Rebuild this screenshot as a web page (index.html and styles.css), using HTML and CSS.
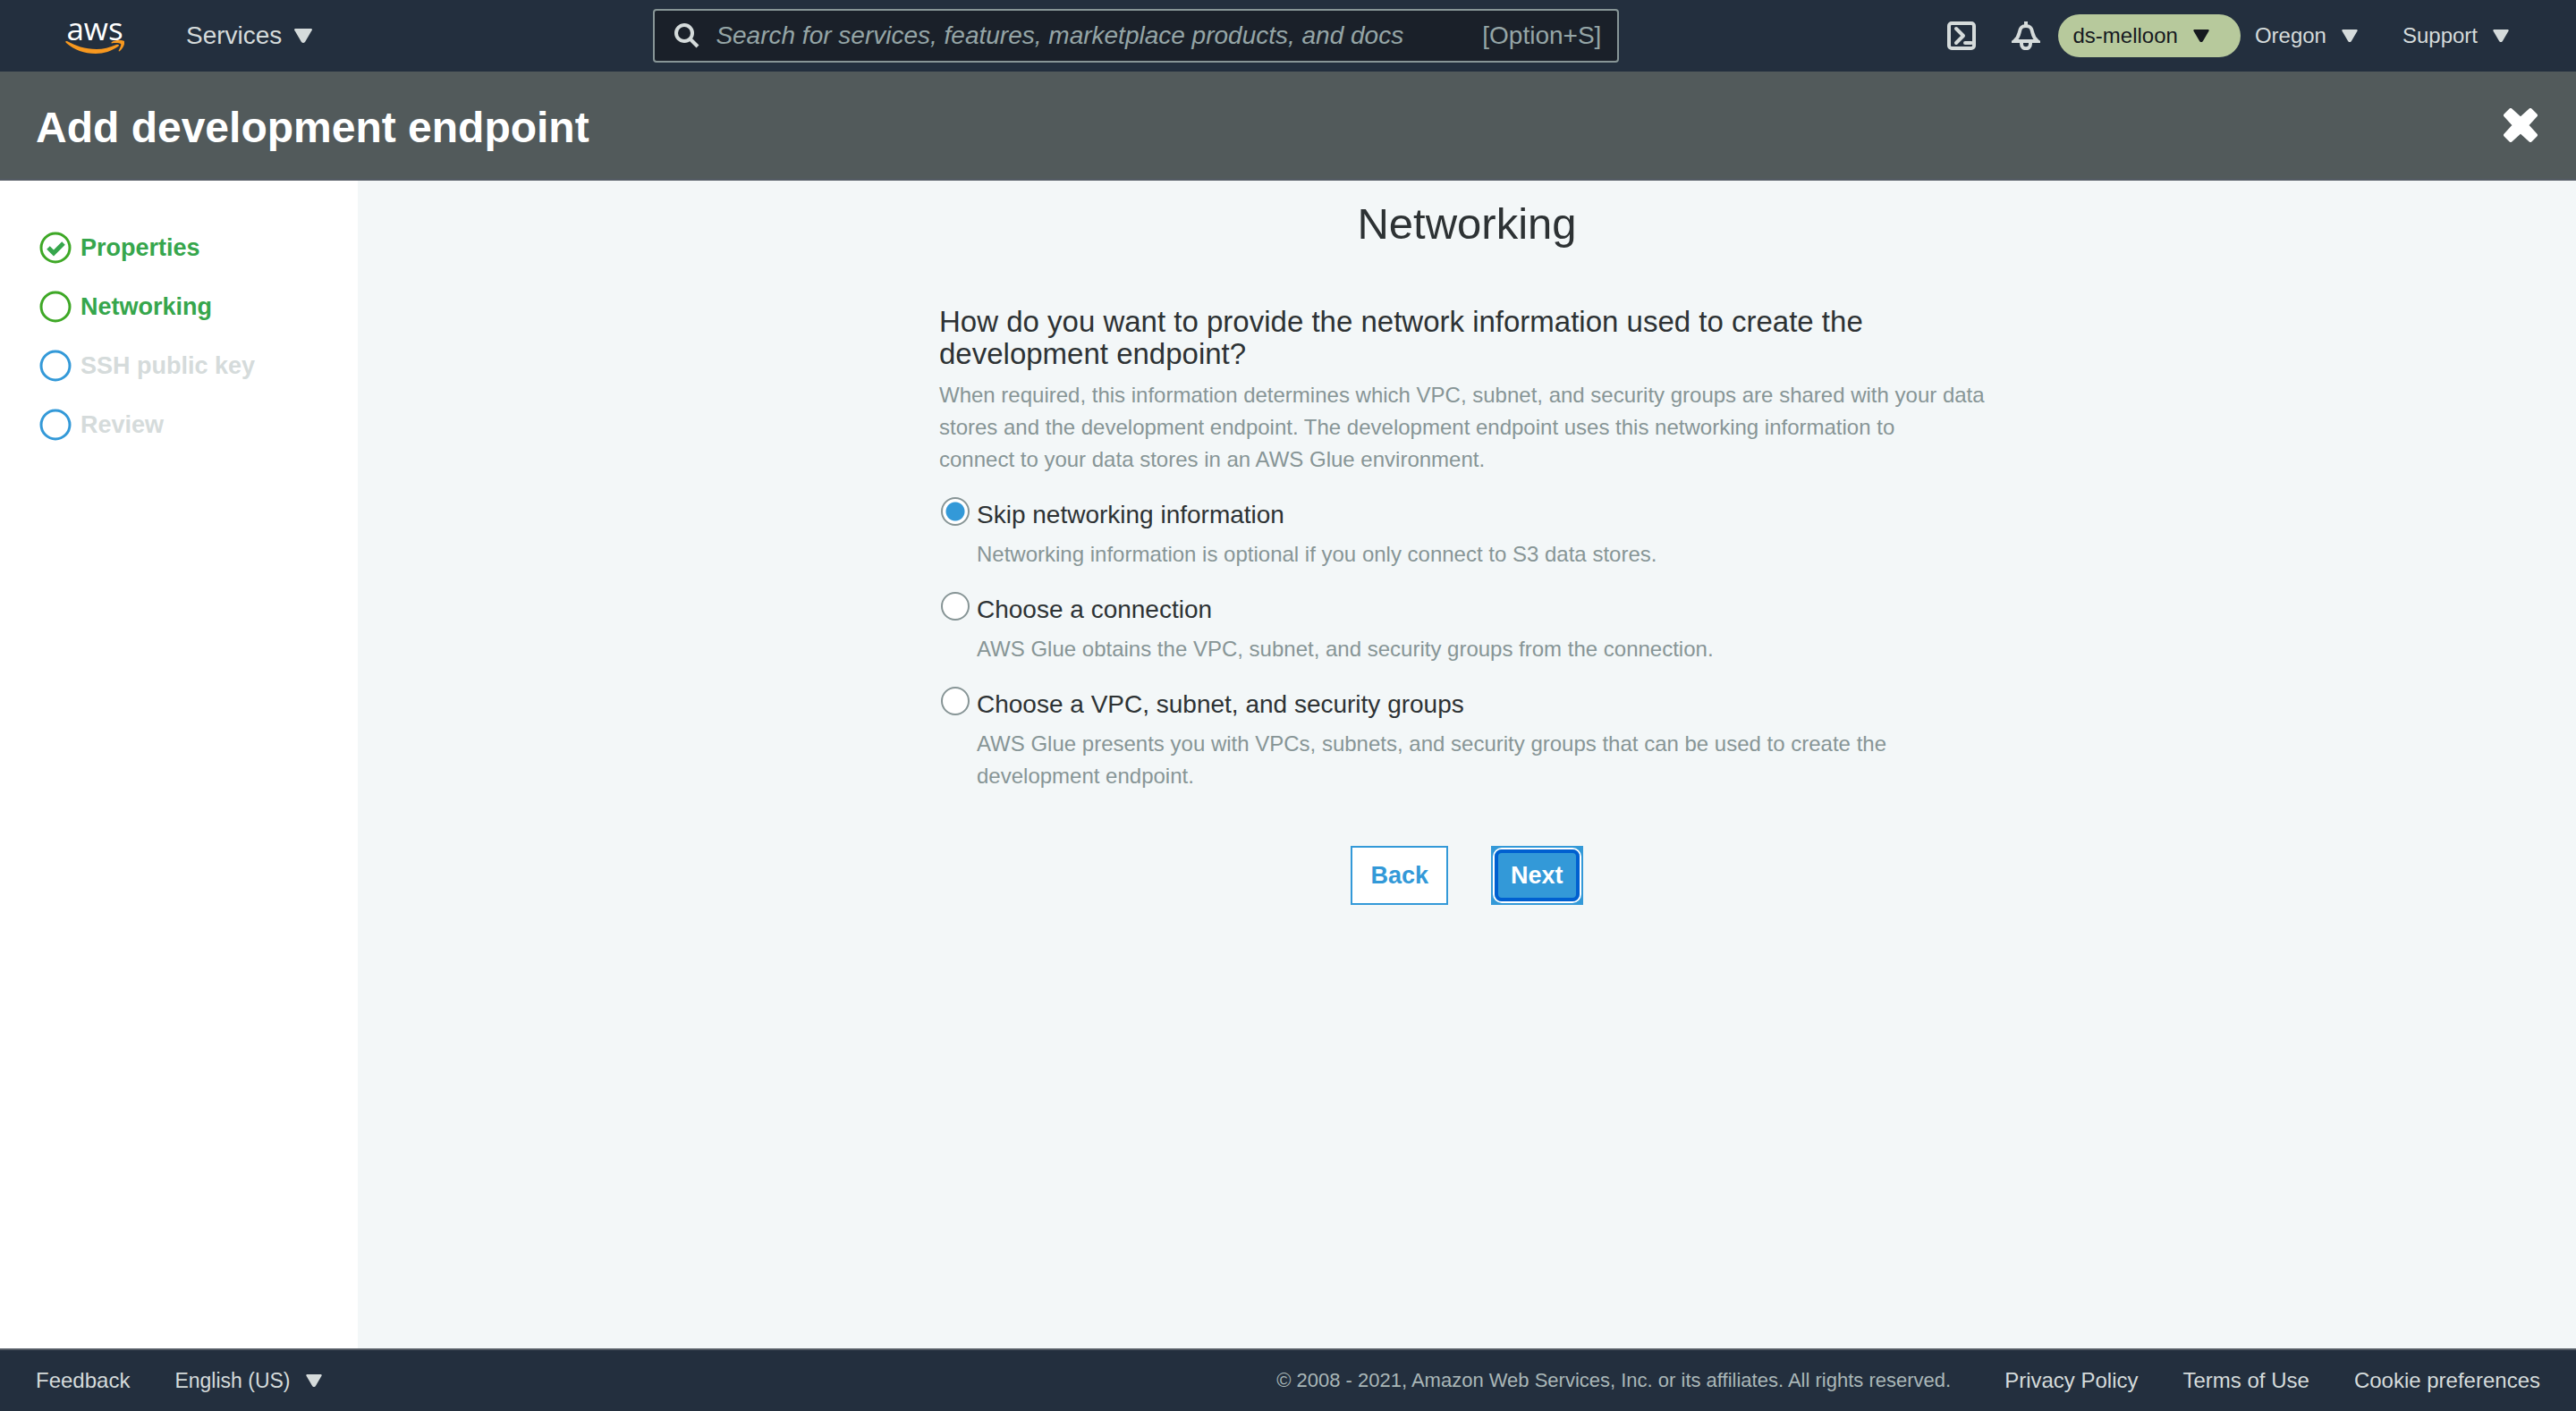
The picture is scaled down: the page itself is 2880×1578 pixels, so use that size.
FILE: index.html
```html
<!DOCTYPE html>
<html lang="en">
<head>
<meta charset="utf-8">
<title>Add development endpoint</title>
<link rel="stylesheet" href="styles.css">
</head>
<body>
<header class="topbar">
  <a class="logo" href="#" aria-label="AWS home">
    <span class="logo-word">aws</span>
    <svg class="logo-smile" viewBox="0 0 66 16" aria-hidden="true">
      <path d="M1 1C0 1 0 2 1 3C10 11 21 15 34 15C43 15 52 12 59 7C61 6 60 4 57 5C50 8 42 10 35 10C22 10 11 6 2 1Z"/>
      <path d="M52 2C56 -1 65 0 66 1C67 3 65 9 61 12C60 13 59 12 60 11C61 9 63 5 62 4C61 3 57 3 54 3C51 4 51 3 52 2Z"/>
    </svg>
  </a>
  <button class="menu menu-services" type="button">Services<svg class="caret caret-lg" viewBox="0 0 20 16" aria-hidden="true"><path d="M1 0H19Q21 1 19 3L12 15Q10 17 8 15L1 3Q-1 1 1 0Z"/></svg></button>
  <label class="search">
    <svg class="search-icon" viewBox="0 0 28 28" aria-hidden="true"><circle cx="11" cy="11" r="9"/><path d="M18 18L26 26"/></svg>
    <input class="search-input" type="text" aria-label="Search" placeholder="Search for services, features, marketplace products, and docs">
    <span class="search-key">[Option+S]</span>
  </label>
  <nav class="tools" aria-label="Account">
    <button class="icon-button shell" type="button" aria-label="CloudShell">
      <svg viewBox="0 0 32 32" aria-hidden="true"><rect x="2" y="2" width="28" height="28" rx="3"/><path d="M10 8L18 16L10 24M20 24H27" stroke-linecap="round" stroke-linejoin="round"/></svg>
    </button>
    <button class="icon-button bell" type="button" aria-label="Notifications">
      <svg viewBox="0 0 32 32" aria-hidden="true"><path d="M16 0V5M3 22C8 18 8 15 9 11C10 6 12 5 16 5S22 6 23 11C24 15 24 18 29 22ZM11 23V25C11 32 21 32 21 25V23"/></svg>
    </button>
    <button class="menu menu-account" type="button">ds-melloon<svg class="caret" viewBox="0 0 20 16" aria-hidden="true"><path d="M1 0H19Q21 1 19 3L12 15Q10 17 8 15L1 3Q-1 1 1 0Z"/></svg></button>
    <button class="menu menu-region" type="button">Oregon<svg class="caret" viewBox="0 0 20 16" aria-hidden="true"><path d="M1 0H19Q21 1 19 3L12 15Q10 17 8 15L1 3Q-1 1 1 0Z"/></svg></button>
    <button class="menu" type="button">Support<svg class="caret" viewBox="0 0 20 16" aria-hidden="true"><path d="M1 0H19Q21 1 19 3L12 15Q10 17 8 15L1 3Q-1 1 1 0Z"/></svg></button>
  </nav>
</header>
<div class="titlebar">
  <h1 class="title">Add development endpoint</h1>
  <button class="icon-button close" type="button" aria-label="Close">
    <svg viewBox="0 0 38 38" aria-hidden="true"><path d="M8 2L19 12L30 2L36 8L26 19L36 30L30 36L19 26L8 36L2 30L12 19L2 8Z"/></svg>
  </button>
</div>
<div class="body">
  <aside class="sidebar">
    <ol class="steps">
      <li class="step step-done"><svg class="step-icon" viewBox="0 0 36 36" aria-hidden="true"><circle cx="18" cy="18" r="16"/><path d="M10 18L16 24L27 13"/></svg>Properties</li>
      <li class="step step-done" aria-current="step"><svg class="step-icon" viewBox="0 0 36 36" aria-hidden="true"><circle cx="18" cy="18" r="16"/></svg>Networking</li>
      <li class="step"><svg class="step-icon" viewBox="0 0 36 36" aria-hidden="true"><circle cx="18" cy="18" r="16"/></svg>SSH public key</li>
      <li class="step"><svg class="step-icon" viewBox="0 0 36 36" aria-hidden="true"><circle cx="18" cy="18" r="16"/></svg>Review</li>
    </ol>
  </aside>
  <main class="main">
    <form class="wizard">
      <h2 class="heading">Networking</h2>
      <fieldset class="question">
        <legend class="legend">How do you want to provide the network information used to create the development endpoint?</legend>
        <p class="hint intro">When required, this information determines which VPC, subnet, and security groups are shared with your data stores and the development endpoint. The development endpoint uses this networking information to<br>connect to your data stores in an AWS Glue environment.</p>
        <div class="option">
          <input class="radio" type="radio" name="network" id="skip" checked>
          <label class="option-label" for="skip">Skip networking information</label>
          <p class="hint option-hint">Networking information is optional if you only connect to S3 data stores.</p>
        </div>
        <div class="option">
          <input class="radio" type="radio" name="network" id="connection">
          <label class="option-label" for="connection">Choose a connection</label>
          <p class="hint option-hint">AWS Glue obtains the VPC, subnet, and security groups from the connection.</p>
        </div>
        <div class="option">
          <input class="radio" type="radio" name="network" id="vpc">
          <label class="option-label" for="vpc">Choose a VPC, subnet, and security groups</label>
          <p class="hint option-hint">AWS Glue presents you with VPCs, subnets, and security groups that can be used to create the development endpoint.</p>
        </div>
      </fieldset>
      <div class="actions">
        <button class="button" type="button">Back</button>
        <button class="button button-primary" type="button"><span class="focus-ring">Next</span></button>
      </div>
    </form>
  </main>
</div>
<footer class="footer">
  <a class="footer-link" href="#">Feedback</a>
  <button class="menu menu-language" type="button">English (US)<svg class="caret" viewBox="0 0 20 16" aria-hidden="true"><path d="M1 0H19Q21 1 19 3L12 15Q10 17 8 15L1 3Q-1 1 1 0Z"/></svg></button>
  <p class="copyright">© 2008 - 2021, Amazon Web Services, Inc. or its affiliates. All rights reserved.</p>
  <a class="footer-link" href="#">Privacy Policy</a>
  <a class="footer-link" href="#">Terms of Use</a>
  <a class="footer-link" href="#">Cookie preferences</a>
</footer>
</body>
</html>
```
FILE: styles.css
```css
* {
  box-sizing: border-box;
}

body {
  margin: 0;
  min-height: 100vh;
  display: flex;
  flex-direction: column;
  font-family: "Liberation Sans", Arial, sans-serif;
  font-size: 24px;
  color: #2d3234;
  background: #f3f7f8;
}

h1, h2, p, ol, fieldset {
  margin: 0;
  padding: 0;
  border: 0;
  font-weight: 400;
}

button {
  margin: 0;
  padding: 0;
  border: 0;
  background: none;
  font: inherit;
  color: inherit;
}

.topbar {
  display: flex;
  align-items: center;
  height: 80px;
  padding: 0 75px 0 72px;
  background: #232f3e;
  color: #d5dbdb;
}

.logo {
  display: flex;
  flex-direction: column;
  align-items: center;
  width: 68px;
  text-decoration: none;
}

.logo-word {
  font-family: "Open Sans", "Noto Sans", sans-serif;
  font-weight: 500;
  font-size: 35px;
  line-height: 26px;
  color: #fff;
}

.logo-smile {
  width: 66px;
  height: 16px;
  fill: #f7981f;
}

.menu {
  display: flex;
  align-items: center;
  gap: 17px;
  white-space: nowrap;
}

.menu-services {
  gap: 14px;
  margin-left: 68px;
  font-size: 28px;
}

.menu-language {
  font-size: 23px;
}

.caret {
  width: 18px;
  height: 14px;
  fill: currentColor;
}

.caret-lg {
  width: 20px;
  height: 16px;
}

.search {
  display: flex;
  align-items: center;
  flex: 0 1 1080px;
  height: 60px;
  margin-left: 381px;
  padding: 0 18px 0 22px;
  border: 2px solid #879596;
  border-radius: 4px;
  background: #1a2029;
  color: #95a5a6;
  font-size: 28px;
}

.search-icon {
  flex: none;
  width: 28px;
  height: 28px;
  fill: none;
  stroke: #d5dbdb;
  stroke-width: 4;
}

.search-input {
  flex: 1;
  min-width: 0;
  margin: 0 0 0 18px;
  padding: 0;
  border: 0;
  outline: 0;
  background: none;
  font: inherit;
  color: inherit;
}

.search-input::placeholder {
  font-style: italic;
  color: #95a5a6;
  opacity: 1;
}

.tools {
  display: flex;
  align-items: center;
  margin-left: auto;
}

.icon-button {
  display: flex;
}

.icon-button svg {
  width: 32px;
  height: 32px;
  fill: none;
  stroke: currentColor;
  stroke-width: 4;
}

.bell {
  margin: 0 20px 0 40px;
}

.menu-account {
  height: 48px;
  margin-right: 16px;
  padding: 0 35px 0 16px;
  border-radius: 24px;
  background: #b7c99c;
  color: #16191f;
}

.menu-region {
  margin-right: 50px;
}

.titlebar {
  display: flex;
  align-items: center;
  justify-content: space-between;
  height: 122px;
  padding: 0 43px 0 40px;
  border-bottom: 2px solid #545b64;
  background: #525a5b;
  color: #fff;
}

.title {
  padding-top: 4px;
  font-size: 48px;
  font-weight: 700;
}

.close svg {
  width: 38px;
  height: 38px;
  fill: currentColor;
  stroke-linejoin: round;
}

.body {
  display: flex;
  flex: 1;
}

.sidebar {
  flex: none;
  width: 400px;
  padding: 57px 44px;
  background: #fff;
}

.steps {
  display: flex;
  flex-direction: column;
  gap: 30px;
  list-style: none;
}

.step {
  display: flex;
  align-items: center;
  gap: 10px;
  height: 36px;
  font-size: 27px;
  font-weight: 700;
  color: #d5dbdb;
}

.step-icon {
  width: 36px;
  height: 36px;
  fill: none;
  stroke: #3399d8;
  stroke-width: 3;
}

.step-icon path {
  stroke: #36a64c;
  stroke-width: 5;
}

.step-done {
  color: #36a64c;
}

.step-done .step-icon {
  stroke: #3ea826;
}

.main {
  flex: 1;
  padding: 16px 40px;
}

.wizard {
  max-width: 1180px;
  margin: 0 auto;
}

.heading {
  text-align: center;
  font-size: 49px;
  line-height: 64px;
}

.question {
  margin-top: 60px;
}

.legend {
  padding: 0;
  font-size: 33px;
  line-height: 36px;
}

.hint {
  font-size: 24px;
  line-height: 36px;
  color: #879596;
}

.intro {
  padding-top: 10px;
}

.option {
  display: grid;
  grid-template-columns: 42px 1fr;
  margin-top: 18px;
}

.radio {
  appearance: none;
  width: 32px;
  height: 32px;
  margin: 6px 2px 0;
  border: 2px solid #879596;
  border-radius: 50%;
  background: #fff;
}

.radio:checked {
  background: radial-gradient(circle, #3399d8 10px, #fff 11px);
}

.option-label {
  font-size: 28px;
  line-height: 52px;
}

.option-hint {
  grid-column: 2;
}

.actions {
  display: flex;
  justify-content: center;
  gap: 48px;
  margin-top: 60px;
}

.button {
  height: 66px;
  padding: 0 20px;
  border: 2px solid #3399d8;
  background: #fff;
  font-size: 27px;
  font-weight: 700;
  color: #3399d8;
}

.button-primary {
  padding: 0;
  background: #3399d8;
  color: #fff;
}

.focus-ring {
  display: flex;
  align-items: center;
  height: 58px;
  margin: 2px;
  padding: 0 14px;
  border: 4px solid #0060d0;
  border-radius: 8px;
  box-shadow: 0 0 0 2px #fff;
}

.footer {
  display: flex;
  align-items: center;
  gap: 50px;
  height: 70px;
  padding: 0 40px;
  border-top: 2px solid #545b64;
  background: #232f3e;
  color: #d5dbdb;
}

.footer-link {
  color: inherit;
  text-decoration: none;
}

.copyright {
  margin-left: auto;
  padding-right: 10px;
  font-size: 22px;
  color: #aab7b8;
}
```
